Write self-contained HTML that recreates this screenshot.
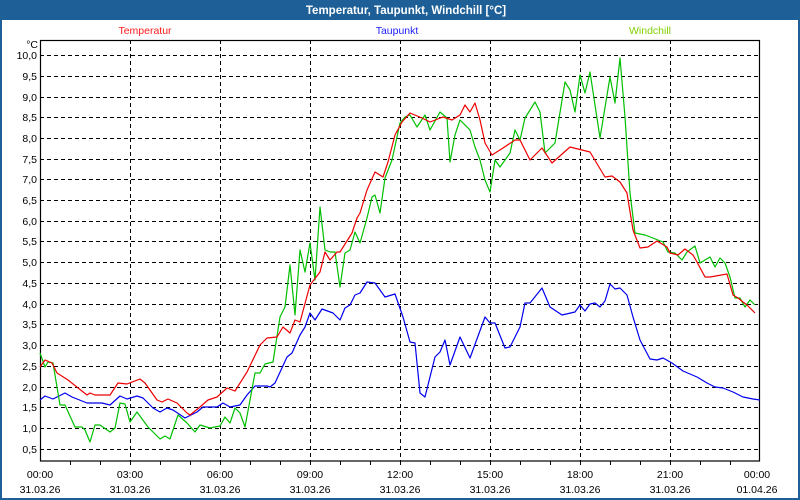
<!DOCTYPE html>
<html><head><meta charset="utf-8"><style>
html,body{margin:0;padding:0;background:#fff;}
svg{display:block;font-family:"Liberation Sans","DejaVu Sans",sans-serif;}
</style></head><body>
<svg width="800" height="500" viewBox="0 0 800 500" xmlns="http://www.w3.org/2000/svg">
<rect x="0" y="0" width="800" height="500" fill="#1d5f96"/>
<rect x="2" y="20" width="796" height="478" fill="#ffffff"/>
<text x="406" y="14" fill="#fff" font-size="11.5" font-weight="bold" text-anchor="middle">Temperatur, Taupunkt, Windchill [°C]</text>
<text x="145" y="34" fill="#ff1a1a" font-size="10.5" text-anchor="middle">Temperatur</text>
<text x="397" y="34" fill="#2020ff" font-size="10.5" text-anchor="middle">Taupunkt</text>
<text x="650" y="34" fill="#80d000" font-size="10.5" text-anchor="middle">Windchill</text>
<g stroke="#000" stroke-width="1" stroke-dasharray="4,3" fill="none">
<path d="M40 55.5H760M40 76.5H760M40 97.5H760M40 117.5H760M40 138.5H760M40 159.5H760M40 179.5H760M40 200.5H760M40 221.5H760M40 241.5H760M40 262.5H760M40 283.5H760M40 304.5H760M40 324.5H760M40 345.5H760M40 366.5H760M40 387.5H760M40 407.5H760M40 428.5H760M40 449.5H760"/>
<path d="M130.5 40V461M220.5 40V461M310.5 40V461M400.5 40V461M490.5 40V461M580.5 40V461M670.5 40V461"/>
</g>
<rect x="40.5" y="40.5" width="719" height="420.5" fill="none" stroke="#000" stroke-width="1.2"/>
<g stroke="#000" stroke-width="1">
<path d="M70.5 461v4M100.5 461v4M130.5 461v4M160.5 461v4M190.5 461v4M220.5 461v4M250.5 461v4M280.5 461v4M310.5 461v4M340.5 461v4M370.5 461v4M400.5 461v4M430.5 461v4M460.5 461v4M490.5 461v4M520.5 461v4M550.5 461v4M580.5 461v4M610.5 461v4M640.5 461v4M670.5 461v4M700.5 461v4M730.5 461v4"/>
</g>
<g font-size="10.5" fill="#000" text-anchor="end">
<text x="38" y="48">°C</text>
<text x="37" y="59">10,0</text><text x="37" y="80">9,5</text><text x="37" y="101">9,0</text><text x="37" y="121">8,5</text><text x="37" y="142">8,0</text><text x="37" y="163">7,5</text><text x="37" y="183">7,0</text><text x="37" y="204">6,5</text><text x="37" y="225">6,0</text><text x="37" y="245">5,5</text><text x="37" y="266">5,0</text><text x="37" y="287">4,5</text><text x="37" y="308">4,0</text><text x="37" y="328">3,5</text><text x="37" y="349">3,0</text><text x="37" y="370">2,5</text><text x="37" y="391">2,0</text><text x="37" y="411">1,5</text><text x="37" y="432">1,0</text><text x="37" y="453">0,5</text>
</g>
<g font-size="10.5" fill="#000" text-anchor="middle">
<text x="40" y="478">00:00</text><text x="130" y="478">03:00</text><text x="220" y="478">06:00</text><text x="310" y="478">09:00</text><text x="400" y="478">12:00</text><text x="490" y="478">15:00</text><text x="580" y="478">18:00</text><text x="670" y="478">21:00</text><text x="757" y="478">00:00</text>
<text x="40" y="493">31.03.26</text><text x="130" y="493">31.03.26</text><text x="220" y="493">31.03.26</text><text x="310" y="493">31.03.26</text><text x="400" y="493">31.03.26</text><text x="490" y="493">31.03.26</text><text x="580" y="493">31.03.26</text><text x="670" y="493">31.03.26</text><text x="757" y="493">01.04.26</text>
</g>
<g fill="none" stroke-width="1.2" stroke-linejoin="round">
<polyline stroke="#0000ee" points="40,400 45,396 53,399 65,393 72,397 87,403 102,403 110,405 120,396 127,399 137,396 143,398 153,408 160,412 167,408 173,410 185,418 197,412 203,407 217,407 223,403 230,407 240,405 247,395 255,386 267,386 270,387 275,383 287,357 292,353 300,335 305,327 310,313 315,320 322,309 333,313 340,320 345,308 350,305 355,295 360,293 367,282 375,283 385,297 395,294 403,317 410,342 415,343 420,393 425,397 435,357 440,352 445,340 450,365 460,337 470,358 485,317 490,323 495,323 505,348 510,347 520,327 525,303 530,303 542,288 550,307 562,315 575,312 580,305 585,311 590,304 595,303 600,307 605,301 610,284 615,289 620,288 627,295 633,317 640,340 650,359 657,360 663,358 672,363 683,371 697,377 707,383 715,387 723,388 733,392 743,397 753,399 760,400"/>
<polyline stroke="#00c000" points="40,353 45,367 48,362 53,363 60,405 65,405 75,427 82,427 85,430 90,442 95,425 100,425 110,432 115,428 120,403 125,404 130,422 137,412 148,427 160,439 165,436 170,439 178,415 187,423 195,432 200,425 210,428 220,426 225,417 230,423 235,408 240,413 245,427 255,373 260,373 265,364 273,362 280,317 285,307 290,265 295,315 300,250 305,272 310,243 315,280 320,207 325,250 330,252 335,252 340,287 345,253 350,250 355,232 360,243 367,218 372,197 375,195 380,213 385,178 392,160 400,123 405,117 410,115 417,127 425,115 430,130 440,112 447,118 450,162 455,135 460,120 470,130 475,147 480,160 485,180 490,192 495,160 500,167 510,153 515,130 520,140 525,118 535,102 540,112 545,153 555,143 565,82 570,90 575,112 580,75 585,93 590,72 600,138 610,77 615,103 620,58 625,117 630,193 635,233 645,235 663,242 668,252 675,253 682,260 687,252 695,246 700,263 710,257 715,267 720,258 725,263 730,277 735,298 740,298 745,307 750,300 755,305"/>
<polyline stroke="#ee0000" points="40,367 45,360 52,363 57,373 68,380 87,395 90,393 95,395 110,395 118,383 127,384 140,379 145,383 157,400 162,402 168,399 177,403 187,413 190,415 200,407 208,400 217,397 227,388 235,391 247,372 260,345 267,338 277,337 283,327 290,333 295,320 300,322 310,285 320,272 325,252 330,260 337,252 340,252 352,233 357,218 360,213 367,190 375,172 383,177 388,162 395,135 402,122 410,113 422,118 430,122 443,117 452,120 460,115 465,105 470,112 475,103 480,120 485,143 492,155 503,148 515,140 520,140 530,160 542,148 552,163 570,147 590,152 605,177 612,176 620,182 627,193 633,230 640,248 648,247 657,241 667,247 670,253 678,255 685,249 693,255 697,262 705,277 710,277 727,274 733,295 738,298 743,302 747,305 755,313"/>
</g>
</svg>
</body></html>
